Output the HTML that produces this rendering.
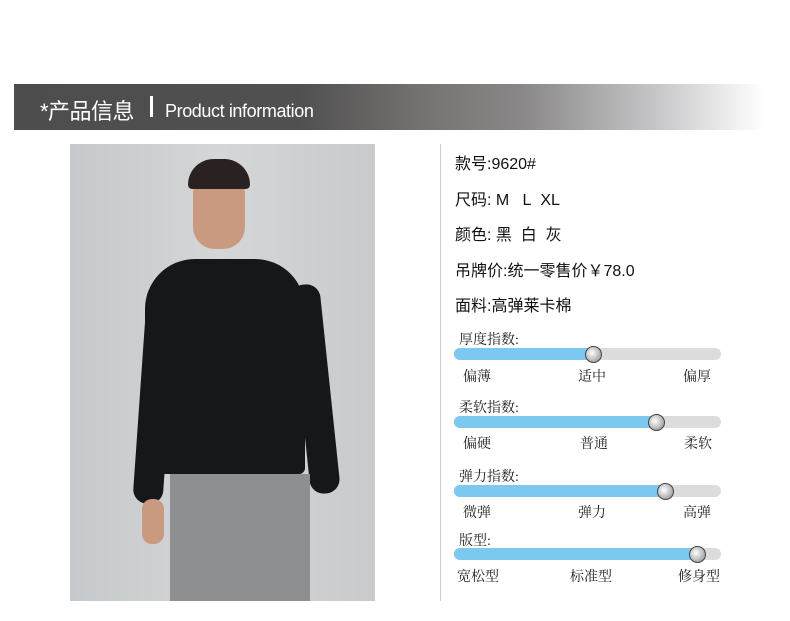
<!DOCTYPE html><html><head><meta charset="utf-8"><style>
body{margin:0;width:790px;height:621px;background:#fff;position:relative;overflow:hidden;font-family:"Liberation Sans","Noto Sans CJK SC",sans-serif}
.a{position:absolute}
.t{position:absolute;left:455px;font-size:16px;color:#111}
.l{position:absolute;font-family:"Liberation Serif","Noto Serif CJK SC",serif;font-size:14px;color:#222}
.bar{position:absolute;left:454px;width:267px;height:12px;border-radius:6px;background:#dcdcdc;overflow:hidden}
.bar i{position:absolute;left:0;top:0;bottom:0;background:#7cc8ee}
.k{position:absolute;width:15px;height:15px;border-radius:50%;border:1px solid #444;background:radial-gradient(circle at 40% 40%,#fff,#aaa 70%,#666);}
</style></head><body>
<div class="a" style="left:14px;top:84px;width:750px;height:46px;background:linear-gradient(90deg,#4d4d4d 0%,#505050 38%,#777372 55%,#8a8888 68%,#c4c4c6 85%,#fff 100%)"></div>
<div class="a" style="left:40px;top:94px;color:#fff;font-size:22px;letter-spacing:-0.5px">*产品信息</div>
<div class="a" style="left:150px;top:96px;width:3px;height:21px;background:#fff"></div>
<div class="a" style="left:165px;top:101px;color:#fff;font-size:18px;letter-spacing:-0.4px">Product information</div>
<div class="a" style="left:70px;top:144px;width:305px;height:457px;background:linear-gradient(90deg,#c6c9cb,#d4d6d7 50%,#c8cacb)">
<div class="a" style="left:123px;top:25px;width:52px;height:80px;border-radius:25px 25px 22px 22px;background:#c99a80"></div>
<div class="a" style="left:118px;top:15px;width:62px;height:30px;border-radius:30px 30px 5px 5px;background:#2a2220"></div>
<div class="a" style="left:75px;top:115px;width:160px;height:215px;border-radius:50px 50px 6px 6px;background:#151718"></div>
<div class="a" style="left:70px;top:140px;width:30px;height:220px;border-radius:14px;background:#151718;transform:rotate(4deg)"></div>
<div class="a" style="left:230px;top:140px;width:30px;height:210px;border-radius:14px;background:#151718;transform:rotate(-6deg)"></div>
<div class="a" style="left:100px;top:330px;width:140px;height:127px;background:#8e8f91"></div>
<div class="a" style="left:72px;top:355px;width:22px;height:45px;border-radius:10px;background:#c99a80"></div>
</div>
<div class="a" style="left:440px;top:144px;width:1px;height:457px;background:#ccc"></div>
<div class="t" style="top:150px">款号:9620#</div>
<div class="t" style="top:186px">尺码:&nbsp;M&nbsp;&nbsp;&nbsp;L&nbsp;&nbsp;XL</div>
<div class="t" style="top:221px">颜色:&nbsp;黑&nbsp;&nbsp;白&nbsp;&nbsp;灰</div>
<div class="t" style="top:257px">吊牌价:统一零售价￥78.0</div>
<div class="t" style="top:292px">面料:高弹莱卡棉</div>

<div class="l" style="left:459px;top:329px">厚度指数:</div>
<div class="bar" style="top:348px"><i style="width:140px"></i></div><div class="k" style="left:585px;top:346px"></div>
<div class="l" style="left:463px;top:366px">偏薄</div><div class="l" style="left:578px;top:366px">适中</div><div class="l" style="left:683px;top:366px">偏厚</div>

<div class="l" style="left:459px;top:397px">柔软指数:</div>
<div class="bar" style="top:416px"><i style="width:202px"></i></div><div class="k" style="left:648px;top:414px"></div>
<div class="l" style="left:463px;top:433px">偏硬</div><div class="l" style="left:580px;top:433px">普通</div><div class="l" style="left:684px;top:433px">柔软</div>

<div class="l" style="left:459px;top:466px">弹力指数:</div>
<div class="bar" style="top:485px"><i style="width:211px"></i></div><div class="k" style="left:657px;top:483px"></div>
<div class="l" style="left:463px;top:502px">微弹</div><div class="l" style="left:578px;top:502px">弹力</div><div class="l" style="left:683px;top:502px">高弹</div>

<div class="l" style="left:459px;top:530px">版型:</div>
<div class="bar" style="top:548px"><i style="width:243px"></i></div><div class="k" style="left:689px;top:546px"></div>
<div class="l" style="left:457px;top:566px">宽松型</div><div class="l" style="left:570px;top:566px">标准型</div><div class="l" style="left:678px;top:566px">修身型</div>
</body></html>
